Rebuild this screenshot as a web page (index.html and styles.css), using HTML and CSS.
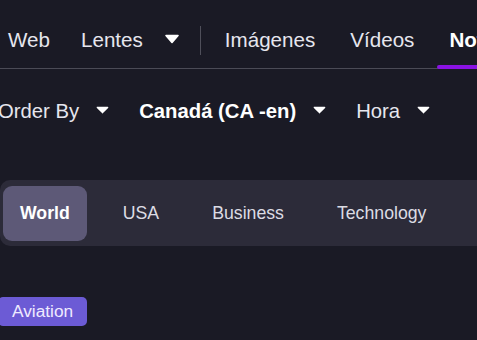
FILE: index.html
```html
<!DOCTYPE html>
<html lang="es">
<head>
  <meta charset="UTF-8" />
  <meta name="viewport" content="width=device-width, initial-scale=1.0"/>
  <title>Noticias</title>
  <link rel="stylesheet" href="styles.css">
</head>
<body>

  <nav class="nav">
    <a href="#" class="nav-link">Web</a>
    <div class="nav-dropdown">
      <span>Lentes</span>
      <svg class="caret caret-lg" viewBox="0 0 16 10"><path d="M2 1.5 H14 L8 8.5 Z"/></svg>
    </div>
    <span class="nav-sep"></span>
    <a href="#" class="nav-link">Imágenes</a>
    <a href="#" class="nav-link">Vídeos</a>
    <a href="#" class="nav-link active">Noticias</a>
  </nav>

  <div class="filters">
    <div class="filter">
      <span>Order By</span>
      <svg class="caret" viewBox="0 0 14 8"><path d="M1.5 1.2 H12.5 L7 6.8 Z"/></svg>
    </div>
    <div class="filter strong">
      <span>Canadá (CA -en)</span>
      <svg class="caret" viewBox="0 0 14 8"><path d="M1.5 1.2 H12.5 L7 6.8 Z"/></svg>
    </div>
    <div class="filter">
      <span>Hora</span>
      <svg class="caret" viewBox="0 0 14 8"><path d="M1.5 1.2 H12.5 L7 6.8 Z"/></svg>
    </div>
  </div>

  <div class="tabs">
    <button class="tab active">World</button>
    <button class="tab">USA</button>
    <button class="tab">Business</button>
    <button class="tab">Technology</button>
  </div>

  <span class="badge">Aviation</span>

</body>
</html>
```

FILE: styles.css
```css
html, body {
  margin: 0;
  padding: 0;
  height: 100%;
  background: #1a1a25;
  font-family: "Liberation Sans", Arial, sans-serif;
  color: #e6e6ee;
  overflow: hidden;
}

/* верхнее меню */
.nav {
  display: flex;
  align-items: stretch;
  gap: 11px;
  height: 56px;
  padding-top: 12px;
  margin-left: -4px;
  border-bottom: 1px solid #4b4b56;
  font-size: 20.6px;
  white-space: nowrap;
}

.nav > * {
  flex-shrink: 0;
}

.nav-link {
  position: relative;
  display: flex;
  align-items: center;
  padding: 0 12px;
  color: #e6e6ee;
  text-decoration: none;
}

.nav-link.active {
  color: #fff;
  font-weight: bold;
}

.nav-link.active::after {
  content: "";
  position: absolute;
  left: 0;
  right: 0;
  bottom: -1px;
  height: 4px;
  border-radius: 2px;
  background: #8a12e4;
}

.nav-dropdown {
  display: flex;
  align-items: center;
  gap: 21px;
  padding: 0 12px;
  margin-left: -4px;
}

.nav-sep {
  align-self: center;
  width: 1px;
  height: 29px;
  background: #4f4f5a;
  margin: 0 1px 0 -3px;
}

.caret {
  flex-shrink: 0;
  width: 13px;
  height: 8px;
  fill: #fff;
  stroke: #fff;
  stroke-width: 1.6;
  stroke-linejoin: round;
  margin-bottom: 4px;
}

.caret-lg {
  width: 16px;
  height: 10px;
  margin-bottom: 2px;
}

/* фильтры */
.filters {
  display: flex;
  align-items: center;
  gap: 30px;
  height: 45px;
  margin-top: 20px;
  margin-left: -2px;
  font-size: 20.3px;
  white-space: nowrap;
}

.filter {
  display: flex;
  align-items: center;
  gap: 17px;
  flex-shrink: 0;
}

.filter.strong {
  font-weight: bold;
  color: #fff;
}

/* категории */
.tabs {
  display: flex;
  gap: 19px;
  margin-top: 46px;
  margin-right: -60px;
  padding: 6px 3px 5px;
  background: #2c2b39;
  border-radius: 10px;
}

.tab {
  flex-shrink: 0;
  height: 55px;
  padding: 0 17px;
  border: none;
  border-radius: 9px;
  background: transparent;
  color: #dcdce4;
  font-family: inherit;
  font-size: 17.7px;
  white-space: nowrap;
  cursor: pointer;
}

.tab.active {
  background: #5d5977;
  color: #fff;
  font-weight: bold;
}

.badge {
  display: inline-flex;
  align-items: center;
  height: 29px;
  margin-top: 51px;
  margin-left: -2px;
  padding: 0 14px;
  border-radius: 5px;
  background: #6c5bd5;
  color: #eeeaff;
  font-size: 17.3px;
}
```
